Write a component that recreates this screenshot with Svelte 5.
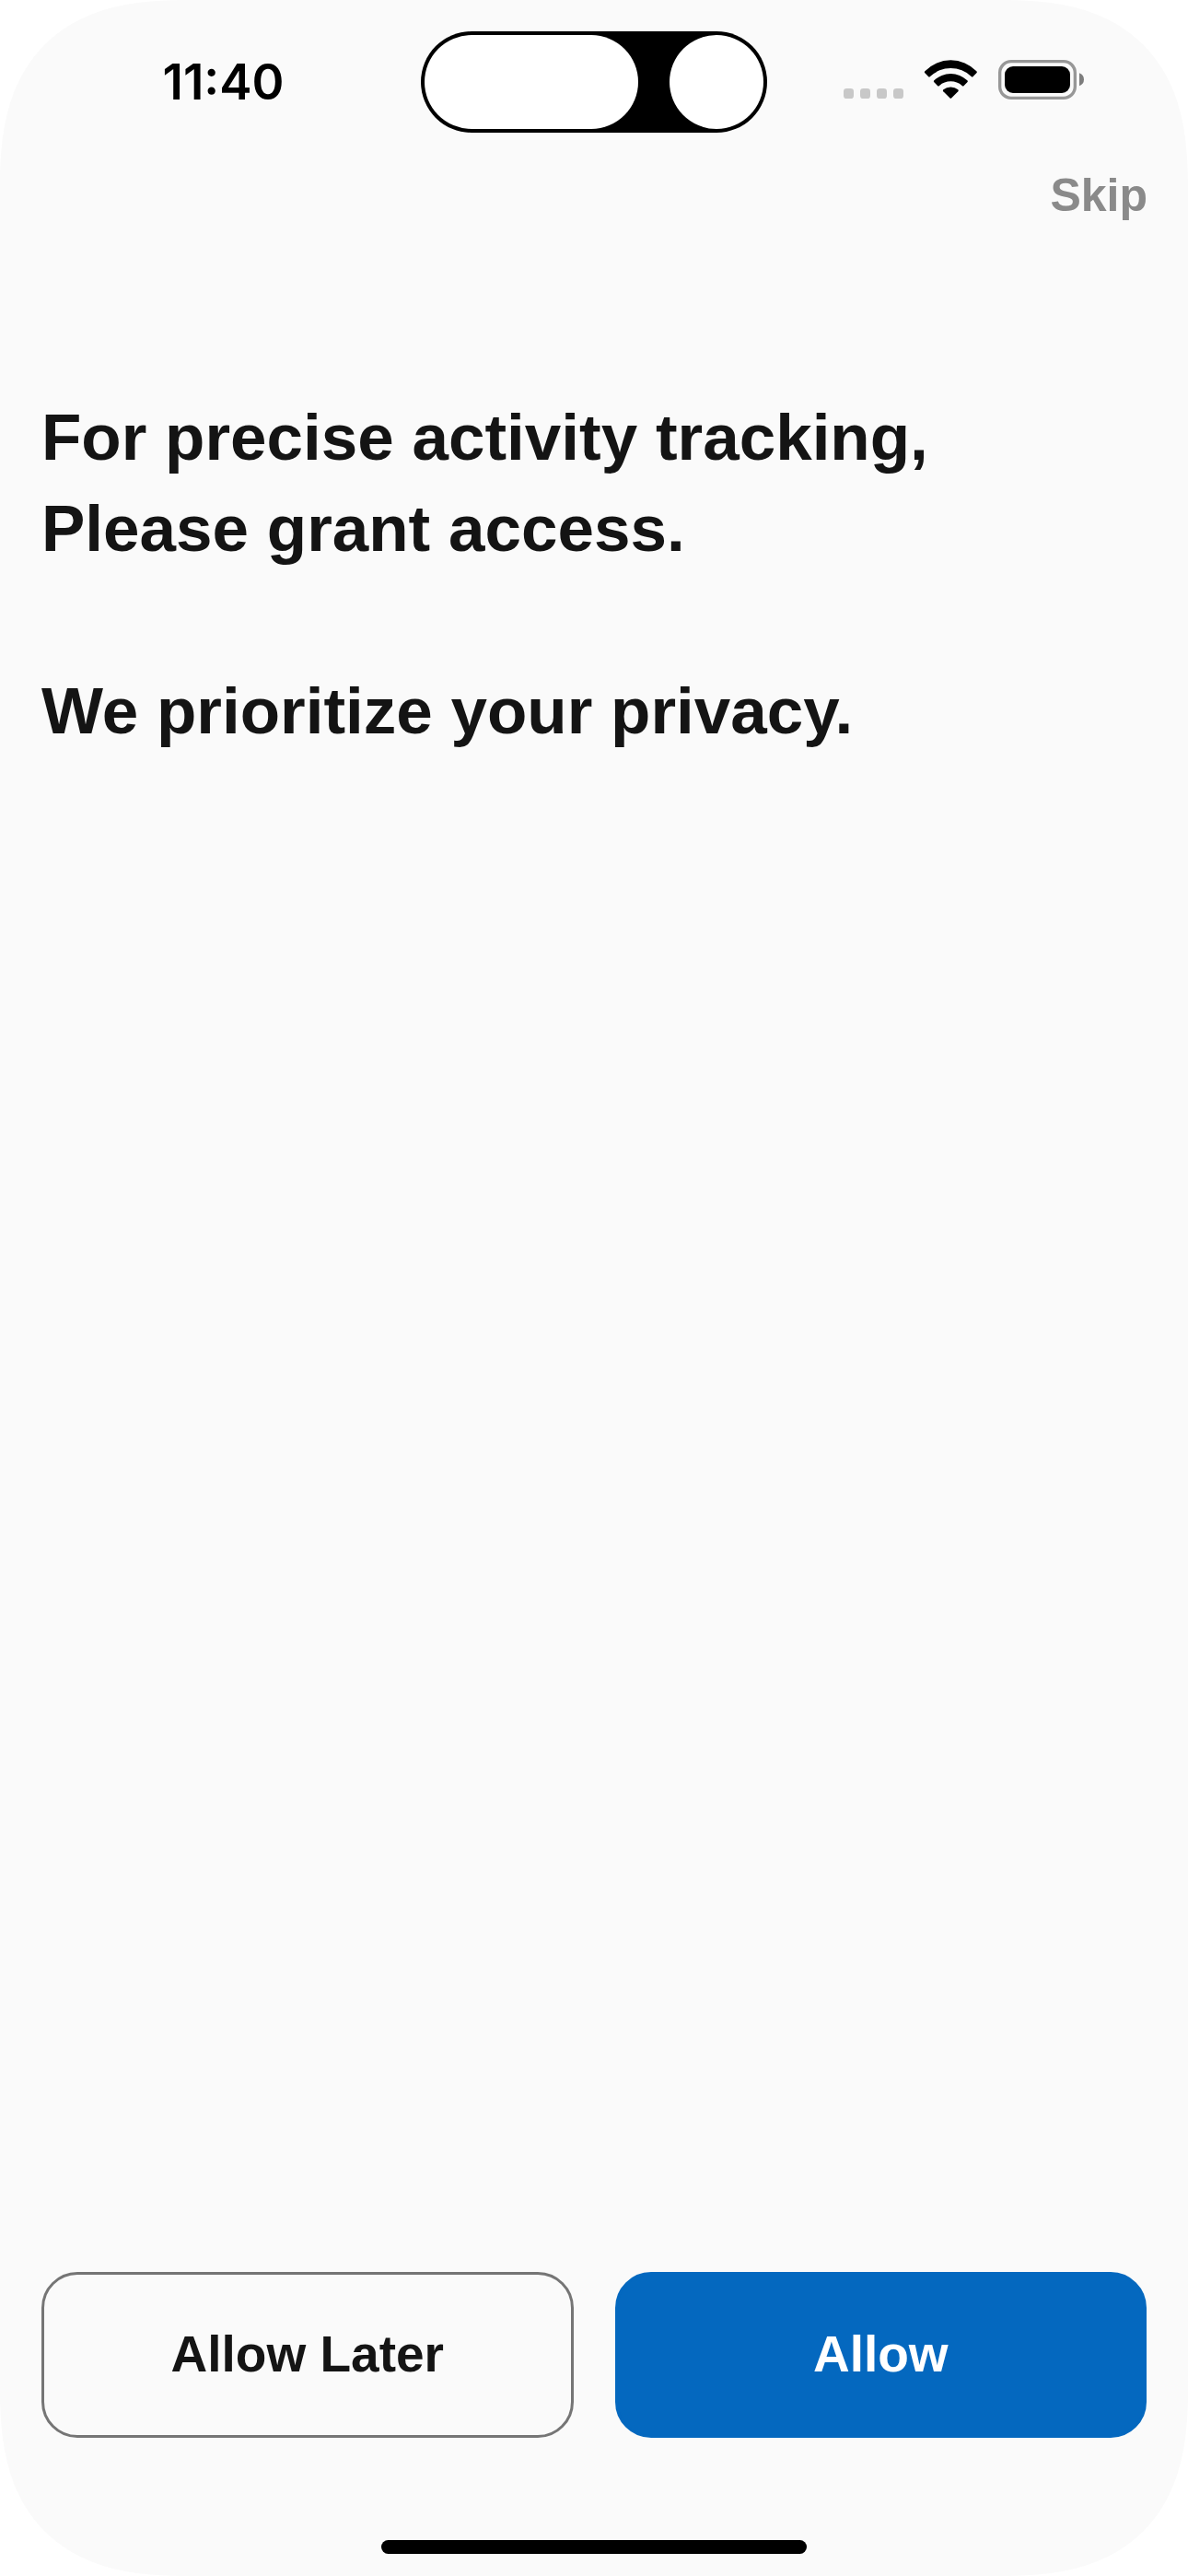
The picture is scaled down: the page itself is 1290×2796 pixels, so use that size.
<script>
  const corners = ['top-left', 'top-right', 'bottom-left', 'bottom-right'];
  const signalDots = [0, 54, 108, 162];
  let choice = $state('');
</script>

<div class="screen" data-choice={choice}>
  {#each corners as corner}
    <svg class="corner {corner}" viewBox="0 0 200 200" aria-hidden="true">
      <path d="M0 0H200C130 0 84 14 48.5 48.5C14 84 0 130 0 200Z" fill="#fff" />
    </svg>
  {/each}

  <header class="status">
    <div class="clock"><time>11:40</time></div>
    <div class="island" aria-hidden="true">
      <span class="pill"></span>
      <span class="lens"></span>
    </div>
    <div class="indicators">
      <svg viewBox="0 0 783 129" role="img" aria-label="Wi-Fi connected, battery full">
        {#each signalDots as x}
          <rect {x} y="93" width="33" height="33" rx="10" fill="#c8c8c8" />
        {/each}
        <path d="M265 37A116 116 0 0 1 433 37q3 3 0 6l-11 11q-3 3-6 0A97 97 0 0 0 282 54q-3 3-6 0l-11-11q-3-3 0-6z" />
        <path d="M295 67A77 77 0 0 1 403 67q3 3 0 6l-11 11q-3 3-6 0A56 56 0 0 0 312 84q-3 3-6 0l-11-11q-3-3 0-6z" />
        <path d="M325 97A38 38 0 0 1 373 97q3 3 0 6l-21 21q-3 3-6 0l-21-21q-3-3 0-6z" />
        <rect x="509" y="5" width="245" height="119" rx="37" fill="none" stroke="#979797" stroke-width="10" />
        <rect x="525" y="21" width="213" height="87" rx="27" />
        <path d="M768 43Q783 49 783 64T768 85Z" fill="#7d7d7d" />
      </svg>
    </div>
  </header>

  <nav class="top">
    <button class="skip" type="button" onclick={() => (choice = 'skip')}>Skip</button>
  </nav>

  <main>
    <h1>For precise activity tracking,<br />Please grant access.<br /><br />We prioritize your privacy.</h1>
  </main>

  <footer>
    <div class="actions">
      <button class="action later" type="button" onclick={() => (choice = 'later')}>Allow Later</button>
      <button class="action allow" type="button" onclick={() => (choice = 'allow')}>Allow</button>
    </div>
    <div class="home"></div>
  </footer>
</div>

<style>
  :global(body) {
    margin: 0;
    background: #fff;
  }

  .screen {
    position: relative;
    display: flex;
    flex-direction: column;
    box-sizing: border-box;
    min-height: 100vh;
    background: #fafafa;
    color: #141414;
    font-family: "Liberation Sans", Arial, sans-serif;
    font-weight: 700;
  }

  .corner {
    position: absolute;
    width: 200px;
    height: 200px;
    pointer-events: none;
  }
  .top-left { top: 0; left: 0; }
  .top-right { top: 0; right: 0; transform: scaleX(-1); }
  .bottom-left { bottom: 0; left: 0; transform: scaleY(-1); }
  .bottom-right { bottom: 0; right: 0; transform: scale(-1); }

  .status {
    display: grid;
    grid-template-columns: 1fr auto 1fr;
    align-items: center;
    padding-top: 34px;
    color: #000;
  }

  .clock {
    padding-left: 28px;
    text-align: center;
    font: 600 53px/60px Inter, sans-serif;
  }

  .island {
    display: flex;
    justify-content: space-between;
    box-sizing: border-box;
    width: 376px;
    height: 110px;
    padding: 4px;
    border-radius: 55px;
    background: #000;
  }
  .pill,
  .lens {
    height: 102px;
    border-radius: 51px;
    background: #fff;
  }
  .pill { width: 232px; }
  .lens { width: 102px; }

  .indicators {
    display: flex;
    justify-content: flex-end;
    padding: 0 113px 5px 0;
  }
  .indicators svg {
    width: 261px;
    height: 43px;
  }

  .top {
    display: flex;
    justify-content: flex-end;
    padding: 38px 44px 0;
  }

  button {
    margin: 0;
    font-family: inherit;
    font-weight: 700;
    cursor: pointer;
  }

  .skip {
    padding: 0;
    border: 0;
    background: none;
    color: #8a8a8a;
    font-size: 50px;
    line-height: 60px;
  }

  main {
    flex: 1;
    padding: 183px 45px 0;
  }

  h1 {
    margin: 0;
    font-size: 71px;
    line-height: 99px;
  }

  footer {
    padding: 0 45px 24px;
  }

  .actions {
    display: grid;
    grid-template-columns: 1fr 1fr;
    gap: 45px;
  }

  .action {
    height: 180px;
    padding: 0 0 2px;
    border: 3px solid #757575;
    border-radius: 39px;
    background: none;
    color: #141414;
    font-size: 55px;
    line-height: 64px;
  }
  .allow {
    border-color: #0468bf;
    background: #0468bf;
    color: #fff;
  }

  .home {
    width: 462px;
    height: 15px;
    margin: 111px auto 0;
    border-radius: 8px;
    background: #000;
  }
</style>
